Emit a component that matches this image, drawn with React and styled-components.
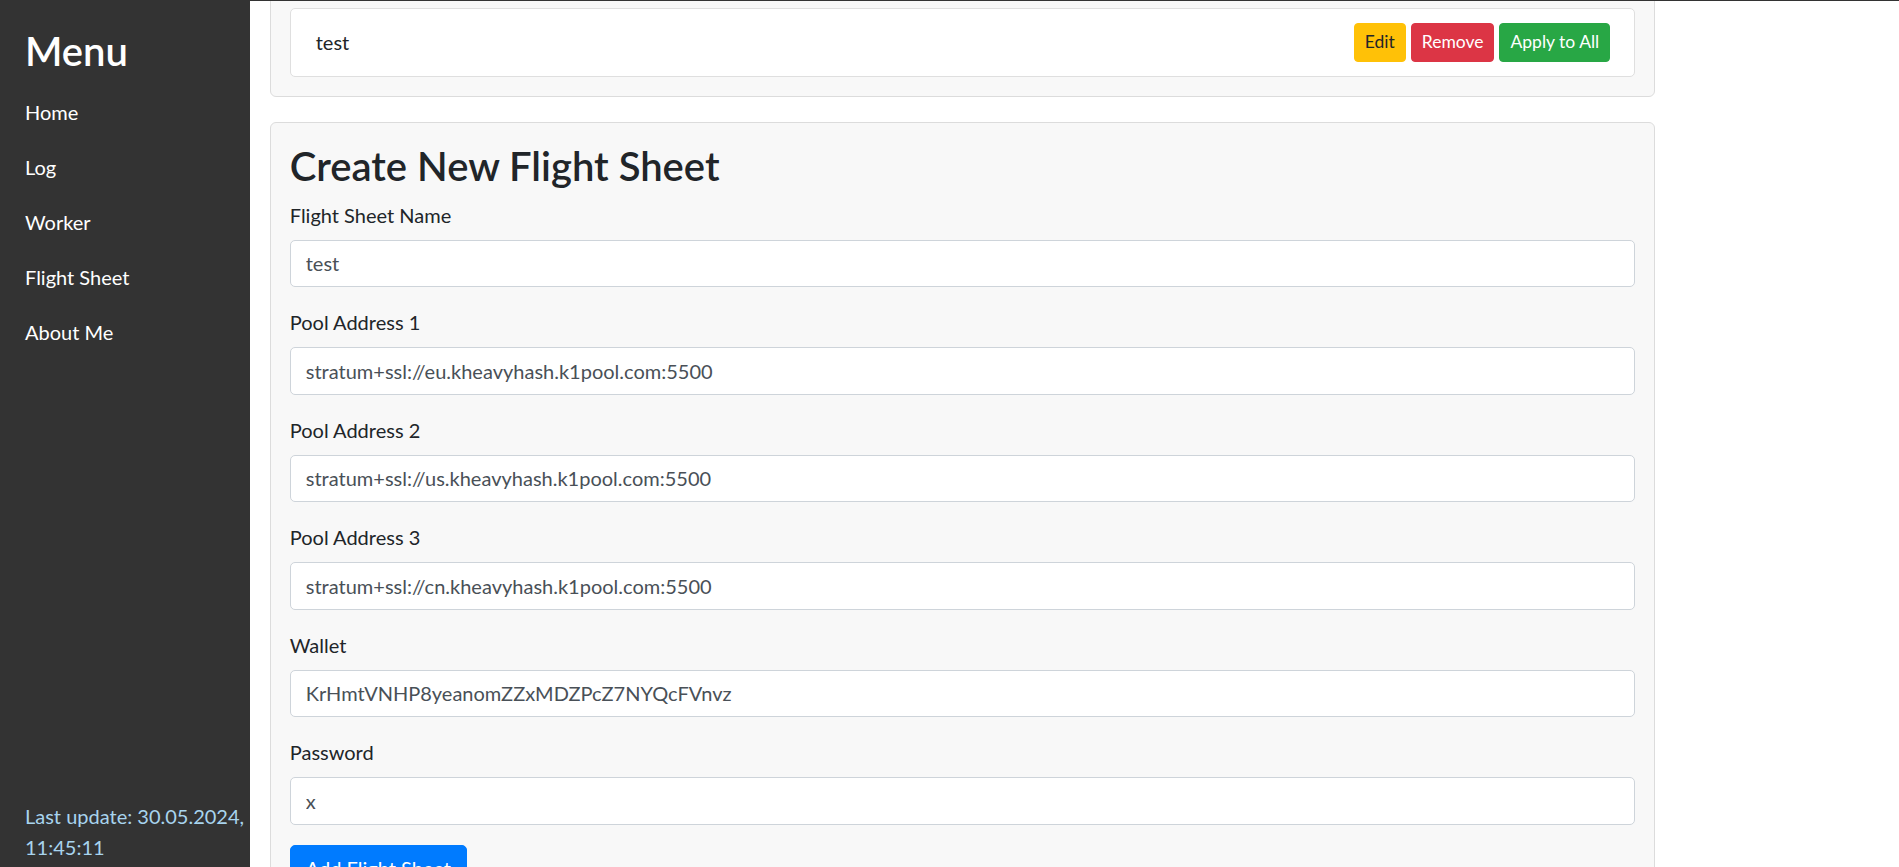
import React, { useLayoutEffect, useRef } from "react";
import styled, { createGlobalStyle } from "styled-components";

const FONT = `"Lato", "Open Sans", "Liberation Sans", sans-serif`;

const GlobalStyle = createGlobalStyle`
  html, body {
    margin: 0;
    padding: 0;
    background: #fff;
    font-family: ${FONT};
    color: #212529;
  }
  * {
    box-sizing: border-box;
  }
`;

const Layout = styled.div`
  display: flex;
  height: 100vh;
  border-top: 1px solid #333;
  overflow: hidden;
`;

const Sidebar = styled.nav`
  width: 250px;
  flex-shrink: 0;
  background: #333;
  color: #fff;
  display: flex;
  flex-direction: column;
  padding: 25.5px 4px 4.5px 25px;
  h2 {
    margin: 0 0 10px;
    font-size: 40px;
    font-weight: 600;
    line-height: 1.2;
  }
`;

const NavLink = styled.a`
  display: block;
  color: #fff;
  text-decoration: none;
  font-size: 20px;
  line-height: 30px;
  padding: 12.5px 0;
  cursor: pointer;
`;

const LastUpdate = styled.div`
  margin-top: auto;
  color: #a8d4ee;
  font-size: 20px;
  line-height: 31px;
  span {
    white-space: nowrap;
  }
`;

const Main = styled.main`
  flex: 1;
  height: 100%;
  overflow: hidden;
  padding: 0 20px;
`;

const Card = styled.section`
  width: 1385px;
  background: #f8f8f8;
  border: 1px solid #dcdcdc;
  border-radius: 6px;
  padding: 18.75px;
  margin-bottom: 25px;
  h2 {
    margin: 0 0 10px;
    font-size: 40px;
    font-weight: 600;
    line-height: 1.2;
    color: #212529;
  }
`;

const SheetItem = styled.div`
  display: flex;
  align-items: center;
  justify-content: space-between;
  background: #fff;
  border: 1px solid #dfdfdf;
  border-radius: 5px;
  padding: 14.5px 24px 14.5px 25px;
  font-size: 20px;
  line-height: 30px;
`;

const Actions = styled.div`
  display: flex;
  gap: 5px;
`;

const colors = {
  warning: { bg: "#ffc107", fg: "#212529" },
  danger: { bg: "#dc3545", fg: "#fff" },
  success: { bg: "#28a745", fg: "#fff" },
  primary: { bg: "#007bff", fg: "#fff" },
};

const Button = styled.button`
  font-family: ${FONT};
  background: ${(p) => colors[p.$variant].bg};
  border: 1px solid ${(p) => colors[p.$variant].bg};
  color: ${(p) => colors[p.$variant].fg};
  font-size: ${(p) => (p.$small ? "17.5px" : "20px")};
  line-height: 1.5;
  padding: ${(p) => (p.$small ? "5px 10px" : "7.5px 15px")};
  border-radius: ${(p) => (p.$small ? "4px" : "5px")};
  cursor: pointer;
`;

const FormGroup = styled.div`
  margin-bottom: 20px;
`;

const Label = styled.label`
  display: block;
  font-size: 20px;
  line-height: 30px;
  margin-bottom: 10px;
`;

const Input = styled.input`
  display: block;
  width: 100%;
  height: 47.5px;
  padding: 7.5px 15px;
  font-family: ${FONT};
  font-size: 20px;
  line-height: 1.5;
  color: #495057;
  background: #fff;
  border: 1px solid #ced4da;
  border-radius: 5px;
  outline: none;
`;

const fields = [
  { label: "Flight Sheet Name", value: "test" },
  { label: "Pool Address 1", value: "stratum+ssl://eu.kheavyhash.k1pool.com:5500" },
  { label: "Pool Address 2", value: "stratum+ssl://us.kheavyhash.k1pool.com:5500" },
  { label: "Pool Address 3", value: "stratum+ssl://cn.kheavyhash.k1pool.com:5500" },
  { label: "Wallet", value: "KrHmtVNHP8yeanomZZxMDZPcZ7NYQcFVnvz" },
  { label: "Password", value: "x" },
];

const menu = ["Home", "Log", "Worker", "Flight Sheet", "About Me"];

export default function App() {
  const mainRef = useRef(null);
  const itemRef = useRef(null);

  useLayoutEffect(() => {
    const main = mainRef.current;
    const item = itemRef.current;
    if (!main || !item) return;
    const offset =
      item.getBoundingClientRect().top - main.getBoundingClientRect().top;
    main.scrollTop = offset - 6.3;
  }, []);

  return (
    <>
      <GlobalStyle />
      <Layout>
        <Sidebar>
          <h2>Menu</h2>
          {menu.map((m) => (
            <NavLink key={m}>{m}</NavLink>
          ))}
          <LastUpdate>
            <span>Last update: 30.05.2024,</span> 11:45:11
          </LastUpdate>
        </Sidebar>
        <Main ref={mainRef}>
          <Card>
            <h2>Flight Sheets</h2>
            <SheetItem ref={itemRef}>
              <span>test</span>
              <Actions>
                <Button $variant="warning" $small>Edit</Button>
                <Button $variant="danger" $small>Remove</Button>
                <Button $variant="success" $small>Apply to All</Button>
              </Actions>
            </SheetItem>
          </Card>
          <Card>
            <h2>Create New Flight Sheet</h2>
            {fields.map((f) => (
              <FormGroup key={f.label}>
                <Label>{f.label}</Label>
                <Input defaultValue={f.value} />
              </FormGroup>
            ))}
            <Button $variant="primary">Add Flight Sheet</Button>
          </Card>
        </Main>
      </Layout>
    </>
  );
}
